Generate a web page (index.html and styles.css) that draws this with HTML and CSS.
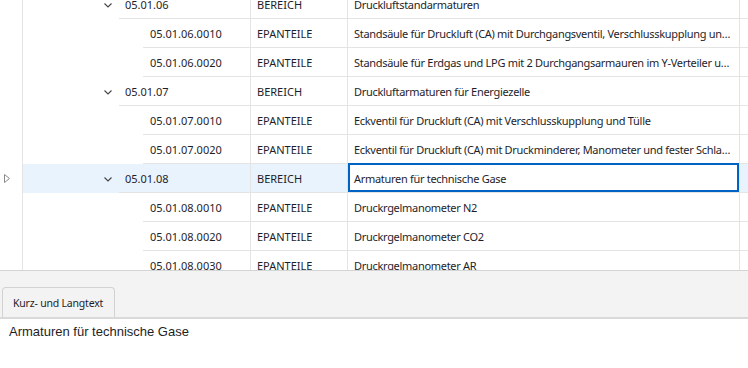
FILE: index.html
```html
<!DOCTYPE html>
<html lang="de">
<head>
    <meta charset="UTF-8">
    <title>Struktur</title>
    <link rel="stylesheet" href="styles.css">
</head>
<body>
    <div class="grid">
        <div class="rows">
            <div class="row">
                <div class="ind"></div>
                <div class="tree lvl1"><span class="chev"><svg width="8" height="5" viewBox="0 0 8 5"><polyline points="0.5,0.5 4,4 7.5,0.5" /></svg></span><span class="key">05.01.06</span></div>
                <div class="cell type">BEREICH</div>
                <div class="cell text">Druckluftstandarmaturen</div>
                <div class="cell last"></div>
            </div>
            <div class="row">
                <div class="ind"></div>
                <div class="tree lvl2"><span class="key">05.01.06.0010</span></div>
                <div class="cell type">EPANTEILE</div>
                <div class="cell text">Standsäule für Druckluft (CA) mit Durchgangsventil, Verschlusskupplung und Tülle auf Konsole</div>
                <div class="cell last"></div>
            </div>
            <div class="row">
                <div class="ind"></div>
                <div class="tree lvl2"><span class="key">05.01.06.0020</span></div>
                <div class="cell type">EPANTEILE</div>
                <div class="cell text">Standsäule für Erdgas und LPG mit 2 Durchgangsarmauren im Y-Verteiler und Schlauchtülle</div>
                <div class="cell last"></div>
            </div>
            <div class="row">
                <div class="ind"></div>
                <div class="tree lvl1"><span class="chev"><svg width="8" height="5" viewBox="0 0 8 5"><polyline points="0.5,0.5 4,4 7.5,0.5" /></svg></span><span class="key">05.01.07</span></div>
                <div class="cell type">BEREICH</div>
                <div class="cell text">Druckluftarmaturen für Energiezelle</div>
                <div class="cell last"></div>
            </div>
            <div class="row">
                <div class="ind"></div>
                <div class="tree lvl2"><span class="key">05.01.07.0010</span></div>
                <div class="cell type">EPANTEILE</div>
                <div class="cell text">Eckventil für Druckluft (CA) mit Verschlusskupplung und Tülle</div>
                <div class="cell last"></div>
            </div>
            <div class="row">
                <div class="ind"></div>
                <div class="tree lvl2"><span class="key">05.01.07.0020</span></div>
                <div class="cell type">EPANTEILE</div>
                <div class="cell text">Eckventil für Druckluft (CA) mit Druckminderer, Manometer und fester Schlauchleitung</div>
                <div class="cell last"></div>
            </div>
            <div class="row selected">
                <div class="ind"><svg width="6" height="9" viewBox="0 0 6 9"><polygon points="0.5,0.5 5.5,4.5 0.5,8.5" /></svg></div>
                <div class="tree lvl1"><span class="chev"><svg width="8" height="5" viewBox="0 0 8 5"><polyline points="0.5,0.5 4,4 7.5,0.5" /></svg></span><span class="key">05.01.08</span></div>
                <div class="cell type">BEREICH</div>
                <div class="cell text focused">Armaturen für technische Gase</div>
                <div class="cell last"></div>
            </div>
            <div class="row">
                <div class="ind"></div>
                <div class="tree lvl2"><span class="key">05.01.08.0010</span></div>
                <div class="cell type">EPANTEILE</div>
                <div class="cell text">Druckrgelmanometer N2</div>
                <div class="cell last"></div>
            </div>
            <div class="row">
                <div class="ind"></div>
                <div class="tree lvl2"><span class="key">05.01.08.0020</span></div>
                <div class="cell type">EPANTEILE</div>
                <div class="cell text">Druckrgelmanometer CO2</div>
                <div class="cell last"></div>
            </div>
            <div class="row">
                <div class="ind"></div>
                <div class="tree lvl2"><span class="key">05.01.08.0030</span></div>
                <div class="cell type">EPANTEILE</div>
                <div class="cell text">Druckrgelmanometer AR</div>
                <div class="cell last"></div>
            </div>
        </div>
    </div>

    <div class="tabstrip">
        <div class="tab">Kurz- und Langtext</div>
    </div>
    <div class="tabpage">Armaturen für technische Gase</div>
</body>
</html>
```

FILE: styles.css
```css
body {
    margin: 0;
    padding: 0;
    background-color: #fff;
    font-family: "Noto Sans", "Open Sans", sans-serif;
    font-size: 11px;
    color: #1e1e2a;
}
.grid {
    height: 270px;
    overflow: hidden;
    border-bottom: 1px solid #d4d4d4;
}
.rows {
    margin-top: -10px;
}
.row {
    display: flex;
    height: 29px;
}
.ind, .tree, .cell {
    box-sizing: border-box;
    flex: none;
}
.ind {
    width: 23px;
    border-right: 1px solid #e4e4e4;
    display: flex;
    align-items: center;
    padding-left: 4px;
}
.ind svg polygon {
    fill: none;
    stroke: #8a8a8a;
}
.tree {
    width: 228px;
    display: flex;
    border-right: 1px solid #e4e4e4;
}
.tree .key {
    flex: 1;
    display: flex;
    align-items: center;
    border-bottom: 1px solid #e4e4e4;
    padding-left: 6px;
    padding-top: 1px;
    white-space: nowrap;
}
.tree.lvl1 {
    padding-left: 76px;
}
.tree.lvl2 {
    padding-left: 120px;
}
.tree.lvl2 .key {
    padding-left: 7px;
}
.chev {
    width: 20px;
    display: flex;
    align-items: center;
    padding-left: 5px;
    padding-top: 1px;
    box-sizing: border-box;
}
.chev svg polyline {
    fill: none;
    stroke: #444;
    stroke-width: 1.1;
}
.cell {
    display: flex;
    align-items: center;
    border-bottom: 1px solid #e4e4e4;
    border-right: 1px solid #e4e4e4;
    padding-left: 6px;
    padding-top: 1px;
    white-space: nowrap;
    overflow: hidden;
}
.cell.type {
    width: 97px;
}
.cell.text {
    width: 392px;
    padding-right: 8px;
    display: block;
    line-height: 28px;
    letter-spacing: -0.3px;
    text-overflow: ellipsis;
}
.cell.last {
    flex: 1;
    border-right: none;
}
.row.selected .tree,
.row.selected .cell {
    background-color: #e9f3fd;
}
.row.selected .cell.focused {
    background-color: #fff;
    box-shadow: inset 0 0 0 2px #0063c3;
    margin-top: -1px;
    height: 30px;
    line-height: 30px;
}
.tabstrip {
    height: 46px;
    background-color: #f3f3f3;
    border-bottom: 2px solid #d9d9d9;
    display: flex;
    align-items: flex-end;
    padding-left: 2px;
}
.tab {
    height: 29px;
    padding: 0 11px 0 10px;
    border: 1px solid #d2d2d2;
    border-bottom: none;
    border-radius: 4px 4px 0 0;
    background-color: #f3f3f3;
    display: flex;
    align-items: center;
    font-size: 10.5px;
    letter-spacing: -0.2px;
    color: #1e1e2a;
}
.tabpage {
    padding: 5px 9px;
    font-family: "Liberation Sans", Arial, sans-serif;
    font-size: 13px;
    color: #1e1e1e;
}
```
